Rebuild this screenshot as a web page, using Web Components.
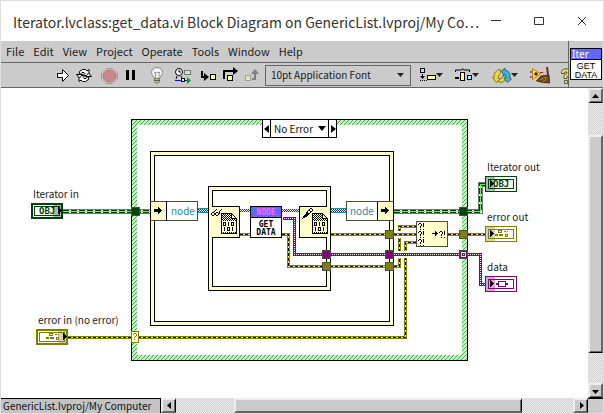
<!DOCTYPE html>
<html lang="en">
<head>
<meta charset="utf-8">
<title>Iterator.lvclass:get_data.vi Block Diagram</title>
<style>
html,body{margin:0;height:100%}
body{font:10px/16px "Noto Sans CJK SC","Noto Sans",sans-serif;color:#1c1c1c;background:#fff}
</style>
</head>
<body>
<app-window></app-window>
<script>
const define=(name,html,after)=>customElements.define(name,class extends HTMLElement{
  constructor(){super();this.attachShadow({mode:'open'}).innerHTML=html;}
  connectedCallback(){if(after&&!this.ready){this.ready=true;after(this,this.shadowRoot);}}
});
/* Turns rows of characters into a path of unit squares; '#' is a filled cell. */
const bits=(x,y,fill,rows)=>{
  let d='';
  rows.forEach((r,j)=>[...r].forEach((c,i)=>{if(c==='#')d+=`M${x+i} ${y+j}h1v1h-1z`;}));
  return `<path fill="${fill}" d="${d}"/>`;
};
const reset=`*{box-sizing:border-box}button,select{font:inherit;color:inherit;margin:0;padding:0;border:0;background:none;border-radius:0;appearance:none}svg{display:block}`;

define('title-bar',`<style>${reset}
:host{display:flex;align-items:center;height:40px;background:#fff;padding-left:12px;color:#333}
h1{flex:1;min-width:0;margin:0;font-size:14px;line-height:24px;font-weight:400;white-space:nowrap;padding-top:2px}
button{width:43px;height:40px;display:grid;place-items:center;flex:none}
</style><h1><slot></slot></h1>
<button aria-label="Minimize"><svg width="12" height="12"><path d="M1 5.500h10" stroke="#333" fill="none"/></svg></button>
<button aria-label="Maximize"><svg width="12" height="12"><path d="M1.500 2.500h9v7h-9z" stroke="#333" fill="none"/></svg></button>
<button aria-label="Close"><svg width="12" height="12"><path d="M2 2l8 8M10 2l-8 8" stroke="#333" fill="none"/></svg></button>`);

define('menu-bar',`<style>${reset}
:host{display:flex;align-items:center;height:22px;padding-left:5px;border-bottom:1px solid #666;font-size:11px}
nav{display:flex;gap:9px}
button{line-height:18px;padding-bottom:2px}
</style><nav></nav>`,(el,root)=>{
  root.querySelector('nav').innerHTML=el.getAttribute('items').split(',').map(t=>`<button>${t}</button>`).join('');
});

define('vi-icon',`<style>${reset}
:host{display:block;box-sizing:border-box;width:32px;height:32px;border:1px solid #000;background:#fff;font:9px/9px "Liberation Sans",sans-serif;color:#000;text-align:center}
b{display:block;font:10px/10px "Noto Sans",sans-serif;color:#fff;background:#6666ff;text-align:left;border-bottom:1px solid #000;padding-left:1px;height:11px;margin-bottom:2px}
span{display:block}
</style><b>Iter</b><span>GET</span><span>DATA</span>`);

const caret=(x,y)=>`<path d="M${x} ${y}h7l-3.500 4z" fill="#222"/>`;
const arrowR=(x,y)=>`<path d="M${x} ${y-3}l4 3.500l-4 3.500z" fill="#000"/>`;
const tools={
run:[52,20,`<path d="M57.500 73.500h5v-4l6 6l-6 6v-4h-5z" fill="#fff" stroke="#000"/>`],
cont:[72,24,`<g fill="#fff" stroke="#000"><path d="M79.500 71.500l3-2h3l1.500 1.500 2-1.500v6h-6l2-2-1-1h-2l-3 3z"/><path d="M88.500 79.500l-3 2h-3l-1.500-1.500-2 1.500v-6h6l-2 2 1 1h2l3-3z"/><path d="M76.500 74.500h6l-3 3.500zM91.500 76.500h-6l3-3.500z"/></g>`],
abort:[96,24,`<path d="M106 68.500h7l4.500 4.500v6l-4.500 4.500h-7l-4.500-4.500v-6z" fill="#eee" stroke="#999"/><path d="M106.500 70h6l3.500 3.500v5l-3.500 3.500h-6l-3.500-3.500v-5z" fill="#c98888" stroke="#a87070"/>`],
pause:[120,24,`<path d="M126 70h3v10h-3zM132 70h3v10h-3z" fill="#000"/>`],
bulb:[144,26,`<path d="M154.500 78.500c0-2-3-3-3-6a5.500 5 0 0 1 11 0c0 3-3 4-3 6z" fill="#f4f4f4" stroke="#888"/><path d="M155.500 78v-4l-1-2l2 1l1.500-1l1 1l1-1-1 2v4" fill="none" stroke="#999"/><path d="M154.500 78.500h5v3l-1 1.500h-3l-1-1.500z" fill="#c8bd84" stroke="#777"/><path d="M155 80.500h5" stroke="#555"/>`],
retain:[170,26,`<circle cx="179" cy="72" r="3.500" fill="#fff" stroke="#000"/><path d="M179 70v2h2M177 76l-1 3M181 76l1.500 3" fill="none" stroke="#000"/><rect x="184.500" y="70.500" width="6" height="4" fill="#ddd" stroke="#777"/><path d="M175 80.500h12" stroke="#00f"/><rect x="181.500" y="78.500" width="3" height="3" fill="#fff" stroke="#000"/><path d="M187 77l4 3.500l-4 3.500z" fill="#0a0"/>`],
into:[196,24,`<path d="M202 71v6h3" stroke="#000" stroke-width="2" fill="none"/><path d="M204 73l5 4l-5 4z"/><rect x="210.500" y="74.500" width="5" height="5" fill="#ffff9c" stroke="#000"/>`],
over:[220,20,`<path d="M224 79v-8h10" stroke="#000" stroke-width="2" fill="none"/><path d="M233 67l5 4l-5 4z"/><rect x="227.500" y="75.500" width="5" height="5" fill="#ffff9c" stroke="#000"/>`],
out:[240,22,`<g opacity=".5"><rect x="245.500" y="75.500" width="5" height="5" fill="#ffff9c" stroke="#777"/><path d="M252 79h3v-6" stroke="#333" stroke-width="2" fill="none"/><path d="M251 74l4-5l4 5z" fill="#333"/></g>`],
align:[414,34,`<rect x="420.500" y="68.500" width="4" height="4" fill="#8cf0ff" stroke="#000"/><rect x="427.500" y="75.500" width="8" height="4" fill="#ffff9c" stroke="#000"/><path d="M422.500 74v3" stroke="#000"/><path d="M420 76h5l-2.500 3zM420 80h1v1h-1zM422 80h1v1h-1zM424 80h1v1h-1zM426 80h1v1h-1z"/>${caret(436,73)}`],
distr:[448,38,`<path d="M455.500 72v-2h6l1-1.500 1 1.500h6v2" fill="none" stroke="#000"/><path d="M455 77h4v2h-4z"/><rect x="460.500" y="72.500" width="4" height="8" fill="#ffff9c" stroke="#000"/><rect x="467.500" y="75.500" width="4" height="4" fill="#8cf0ff" stroke="#000"/>${caret(472,73)}`],
reorder:[486,38,`<path d="M500.500 69.500q-7 1-6.500 8l-1.500 0 4 5 4-4-2 0q-.5-4 2-5z" fill="#e8d43c" stroke="#8a7a18"/><path d="M498 81l3-2.500q2 0 2-3l3 3q-1 4-6 4z" fill="#e8d43c" stroke="#8a7a18"/><path d="M501.500 71l3.500-3v2q6 1 5 8l1.500 1-4 3.500-3.500-4 2-.5q0-3-2-4v2z" fill="#44aecb" stroke="#20708a"/>${caret(511,73)}`],
clean:[524,32,`<path d="M530 72h4M530 77h4" stroke="#00f"/><path d="M540 72.500h3" stroke="#e00"/><path d="M532.500 68.500v11l8-5.500z" fill="#ffe838" stroke="#d07800"/><path d="M536 72v4M534 74h4" stroke="#000"/><path d="M547 67l1 8" stroke="#7c2d0c" stroke-width="2"/><path d="M541 76l8-1 .5 8q-6 0-13-2z" fill="#6e4a22" stroke="#4d2d10"/><path d="M540 80l6-3M543 82l4-4" stroke="#b08448"/>`],
help:[556,12,`<path d="M561.500 73.500v-2l2-2.500h5l2.500 2.500v3l-4 2v2h-3v-3l3-2v-1.500h-2.500v1.500z" fill="#ffec28" stroke="#555"/><path d="M564.500 80.500h3v3h-3z" fill="#ffec28" stroke="#555"/>`]
};
const toolButtons=(names)=>names.map(([k,l])=>`<button aria-label="${l}"><svg width="${tools[k][1]}" height="24" viewBox="${tools[k][0]} 63 ${tools[k][1]} 24">${tools[k][2]}</svg></button>`).join('');
define('tool-bar',`<style>${reset}
:host{display:flex;box-sizing:border-box;align-items:center;height:25px;padding-left:51px;border-bottom:1px solid #666;overflow:hidden}
button{flex:none}
.font{position:relative;display:block;margin:0 3px;flex:none;width:146px;height:21px}
select{width:100%;height:21px;border:1px solid #666;padding:0 5px;line-height:18px}
.font svg{position:absolute;right:7px;top:8px;pointer-events:none}
</style>
${toolButtons([['run','Run'],['cont','Run continuously'],['abort','Abort'],['pause','Pause'],['bulb','Highlight execution'],['retain','Retain wire values'],['into','Step into'],['over','Step over'],['out','Step out']])}
<label class="font"><select aria-label="Text settings"><option>10pt Application Font</option></select><svg width="7" height="4">${caret(0,0)}</svg></label>
${toolButtons([['align','Align objects'],['distr','Distribute objects'],['reorder','Reorder'],['clean','Clean up diagram'],['help','Context help']])}`);

/* Scroll bar: shares are the track before the thumb, the thumb, and the track after it. */
define('scroll-bar',`<style>${reset}
:host{display:flex;flex:1;min-width:0;min-height:0}
:host([vertical]){flex-direction:column}
div{background:#e9e9e9 repeating-conic-gradient(#cfcfcf 0 25%,#eee 0 50%) 0 0/2px 2px}
button{background:#cbcbcb;border:2px solid #eee;border-right-color:#666;border-bottom-color:#666;display:grid;place-items:center;flex:none;width:15px;height:100%;min-width:0;min-height:0}
:host([vertical]) button{width:100%;height:15px;border-bottom:1px solid #000;box-shadow:inset 0 -1px #666}
:host(:not([vertical])) button{border-right:1px solid #000;box-shadow:inset -1px 0 #666}
</style><button class="a" aria-label="Scroll back"></button><div class="b"></div><button class="t" aria-label="Thumb"></button><div class="c"></div><button class="z" aria-label="Scroll forward"></button>`,(el,r)=>{
  const v=el.hasAttribute('vertical');
  const s=d=>`<svg width="7" height="7"><path d="${d}"/></svg>`;
  r.querySelector('.a').innerHTML=s(v?'M0 5L3.500 1L7 5z':'M5 0L1 3.500L5 7z');
  r.querySelector('.z').innerHTML=s(v?'M0 2L3.500 6L7 2z':'M2 0L6 3.500L2 7z');
  ['b','t','c'].forEach((k,i)=>r.querySelector('.'+k).style.flex=el.getAttribute('shares').split(' ')[i]+' 1 0');
});

/* Terminal: a label above its 32x16 symbol. */
const errGlyph=bits(9,4,'#808000',['....####......','....#..#..##.#','....####......','..............','.###.####..###','.###.####..#.#','...........###']);
const kinds={
 obj:['#00400a',`<text x="8" y="11" font-family="DejaVu Sans Mono" font-weight="700" font-size="9" fill="#00400a">OBJ</text>`],
 error:['#808000',errGlyph],
 data:['#800080','<path d="M13.500 5.500h7v5h-7z" fill="none" stroke="#800080"/><path d="M11 7h2v2h-2zM21 7h2v2h-2z" fill="#800080"/>']
};
define('lv-terminal',`<style>${reset}
:host{display:flex;flex-direction:column;gap:1px;position:absolute;white-space:nowrap}
span{padding-left:2px}
</style><span><slot></slot></span><svg width="32" height="16" shape-rendering="crispEdges"></svg>`,(el,r)=>{
  const [c,g]=kinds[el.getAttribute('kind')],inp=el.hasAttribute('input'),w=inp?2:1,x=inp?22:1;
  r.querySelector('svg').innerHTML=`<path fill="#fff" d="M0 0h32v16H0z"/><rect x="${w/2}" y="${w/2}" width="${32-w}" height="${16-w}" fill="none" stroke="${c}" stroke-width="${w}"/>
  <rect x="3.500" y="3.500" width="25" height="9" fill="none" stroke="${c}"/>${g}
  <rect x="${x}" y="1" width="9" height="14" fill="${c}" opacity=".35"/>${arrowR(inp?27:5,7)}`;
});

/* Case selector on the top edge of the case structure. */
define('case-selector',`<style>${reset}
:host{position:absolute;display:flex;height:19px;background:#fff;border:1px solid #000;color:#111;box-sizing:border-box}
button{width:8px;display:grid;place-items:center;flex:none}
button:first-of-type{border-right:1px solid #000}button:last-of-type{border-left:1px solid #000}
label{position:relative}
select{width:57px;height:17px;padding-left:3px;line-height:16px;display:block}
label svg{position:absolute;right:2px;top:6px;pointer-events:none}
</style><button aria-label="Previous case"><svg width="6" height="8"><path d="M5 0v8L0 4z"/></svg></button>
<label><select aria-label="Case"><option>No Error</option></select><svg width="8" height="5"><path d="M0 0h8L4 5z"/></svg></label>
<button aria-label="Next case"><svg width="6" height="8"><path d="M1 0v8L6 4z"/></svg></button>`);

/* White pixels on every second pixel along a run of corner points. */
const dots=pts=>{
  let d='';
  for(let i=1;i<pts.length;i++){
    const [ax,ay]=pts[i-1],[bx,by]=pts[i],n=Math.max(Math.abs(bx-ax),Math.abs(by-ay));
    for(let k=0;k<n;k+=2)d+=`M${ax+Math.sign(bx-ax)*k} ${ay+Math.sign(by-ay)*k}h1v1h-1z`;
  }
  return d;
};
const wire={
 obj:d=>`<g fill="none"><path d="${d}" stroke="#777" stroke-width="5"/><path d="${d}" stroke="#fff" stroke-width="3"/><path d="${d}" stroke="#00400a" stroke-width="3" stroke-dasharray="6 2"/><path d="${d}" stroke="#6cf05c"/></g>`,
 err:d=>`<g fill="none"><path d="${d}" stroke="#808000" stroke-width="3"/><path d="${d}" stroke="#ff0"/><path d="${d}" stroke="#000" stroke-dasharray="3 2"/></g>`,
 data:pts=>`<path d="M${pts.map(([x,y])=>`${x+.5} ${y+.5}`).join('L')}" fill="none" stroke="#800080" stroke-width="3"/><path fill="#fff" d="${dots(pts)}"/>`,
 ref:(x,w,edge)=>{
  let d='';
  for(let j=0;j<3;j++)for(let i=j%2;i<w;i+=2)d+=`M${x+i} ${209+j}h1v1h-1z`;
  return (edge?`<rect x="${x}" y="208" width="${w}" height="5" fill="#009a9a"/>`:'')+`<rect x="${x}" y="209" width="${w}" height="3" fill="#fff"/><path fill="#800080" d="${d}"/>`;
 }
};
const hatch=(x,y,w,h)=>{
  let d='';
  for(let j=y;j<y+h;j++)for(let i=x;i<x+w;i++)if((i+j)%4===0)d+=`M${i} ${j}h1v1h-1z`;
  return `<rect x="${x}" y="${y}" width="${w}" height="${h}" fill="#b3ffb3"/><path fill="#6f9070" d="${d}"/>`;
};
const tunnel=(x,y,c)=>`<rect x="${x+.5}" y="${y+.5}" width="8" height="8" fill="${c}" stroke="#4d4d33"/>`;
const doc=(x,y)=>bits(x,y,'#000',[
'###########.....',
'#.#.#.#.#.##....',
'##.#.#.#.##.#...',
'#.#.#.#.#.#..#..',
'##.#.#.#.##...#.',
'#.#.#.#.#.######',
'##.#.#.#.#.#.#.#',
'#.#.#.#.#.#.#.##',
'#..............#',
'#.###..#..###..#',
'#.#.#..#..#.#..#',
'#.#.#..#..#.#..#',
'#.###..#..###..#',
'#..............#',
'#..#..###..#...#',
'#..#..#.#..#...#',
'#..#..#.#..#...#',
'#..#..###..#...#',
'#..............#',
'#.#.#.#.#.#.#.##',
'################']);
const glasses=bits(211,209,'#000',['.....#....#','....#....#.','...#....#..','.##..##.#..','#..##..##..','#..##..#...','.##..##....']);
const pen=bits(301,208,'#000',['.........##.','........#..#','.......##..#','......#..##.','.....##..#..','.....####...','....####....','...####.....','..####......','..##........','.#..........']);
const qb=(x,y)=>bits(x,y,'#000',['.##..#','#..#.#','...#.#','..#..#','..#...','......','..#..#']);
const arrow=(x,y)=>bits(x,y,'#000',['....#...','....##..','#######.','########','#######.','....##..','....#...']);
const nodeBox=(left)=>left
 ?`<rect x="150" y="201" width="17" height="20" fill="#ffffcc"/><path d="M150.500 201v20" stroke="#000"/><path d="M150 201.500h47.500v19H150" fill="none" stroke="#4d4d33"/><rect x="167" y="202" width="30" height="18" fill="#fff"/><path d="M166.500 201v20" stroke="#000"/>${arrow(154,207)}`
 :`<rect x="346.500" y="201.500" width="31" height="19" fill="#fff" stroke="#4d4d33"/><rect x="378" y="201" width="15" height="20" fill="#ffffcc"/><path d="M377.500 201v20" stroke="#000"/><path d="M377 201.500h16M377 220.500h16" stroke="#4d4d33"/><path d="M393.500 200v22" stroke="#000"/>${arrow(381,207)}`;

define('block-diagram',`<style>${reset}
:host{display:block;position:relative;overflow:hidden;background:#fff;flex:1;min-width:0}
.plane{position:absolute;left:0;top:0}
text{font:10px "Noto Sans CJK SC","Noto Sans",sans-serif}
.mono{font:bold 8px "DejaVu Sans Mono",monospace}
</style>
<svg class="plane" width="587" height="310" viewBox="1 88 587 310" shape-rendering="crispEdges">
<rect x="131.500" y="119.500" width="336" height="241" fill="#fff" stroke="#000"/>
${hatch(132,120,335,5)}${hatch(132,355,335,5)}${hatch(132,125,5,230)}${hatch(462,125,5,230)}
<rect x="150.500" y="151.500" width="243" height="174" fill="#ffffcc" stroke="#000"/><rect x="154.500" y="155.500" width="235" height="166" fill="#fff" stroke="#000"/>
<rect x="208.500" y="186.500" width="122" height="104" fill="#ffffcc" stroke="#000"/><rect x="212.500" y="190.500" width="114" height="96" fill="#fff" stroke="#000"/>
${wire.obj('M63 211.500H150')}${wire.obj('M394 211.500H480.500V184.500H486')}
${wire.ref(198,10,1)}${wire.ref(240,10)}${wire.ref(282,17)}${wire.ref(331,15,1)}
${wire.err('M240 234.500H250')}${wire.err('M282 234.500H288.500V266.500H390')}${wire.err('M331 234.500H385')}
${wire.err('M394 266.500H399.500V226.500H416')}<path fill="#fff" d="M397 231h5v7h-5zM397 251h5v7h-5z"/>
${wire.err('M68 337.500H405.500V242.500H416')}<path fill="#fff" d="M403 251h5v7h-5z"/>
${wire.err('M394 234.500H416')}${wire.err('M448 234.500H485')}
${wire.data([[282,218],[294,218],[294,254],[480,254],[480,284],[486,284]])}
<rect x="208" y="206" width="32" height="32" fill="#ffffcc"/><path d="M212 206.500h27.500v31H212M208.500 206v32" fill="none" stroke="#000"/>${glasses}${doc(221,213)}
<rect x="299" y="206" width="32" height="32" fill="#ffffcc"/><path d="M327 206.500h-27.500v31H327M330.500 206v32" fill="none" stroke="#000"/>${pen}${doc(312,213)}
<rect x="250.500" y="206.500" width="31" height="31" fill="#fff" stroke="#000"/><path fill="#6666ff" d="M251 207h30v10h-30z"/><path d="M251 217.500h30" stroke="#000"/>
<text class="mono" x="266" y="215" text-anchor="middle" fill="#ff66ff">NODE</text><text class="mono" x="266" y="227" text-anchor="middle">GET</text><text class="mono" x="266" y="235" text-anchor="middle">DATA</text>
${nodeBox(true)}${nodeBox(false)}
<text x="171" y="215" fill="#2a8a99">node</text><text x="350" y="215" fill="#2a8a99">node</text>
<rect x="416.500" y="221.500" width="31" height="25" fill="#ffffcc" stroke="#4d4d33"/>${qb(418,223)}${qb(418,231)}${qb(418,239)}${qb(439,231)}${bits(432,231,'#000',['...#..','...##.','######','...##.','...#..'])}
${tunnel(131,207,'#00400a')}${tunnel(459,207,'#00400a')}${tunnel(322,250,'#800080')}${tunnel(385,250,'#800080')}${tunnel(459,250,'#800080')}<path fill="#fff" d="M461 252h5v5h-5z"/><path fill="#800080" d="M462 253h3v3h-3z"/><path fill="#fff" d="M463 254h1v1h-1z"/>
${tunnel(322,262,'#808000')}${tunnel(385,262,'#808000')}${tunnel(385,230,'#808000')}${tunnel(459,230,'#808000')}
<rect x="131.500" y="331.500" width="7" height="11" fill="#ffffcc" stroke="#808000"/>${bits(133,333,'#808000',['.##.','#..#','...#','..#.','.#..','....','.#..'])}
</svg>
<case-selector style="left:261px;top:31px"></case-selector>
<lv-terminal kind="obj" input style="left:30px;top:98px">Iterator in</lv-terminal>
<lv-terminal kind="error" input style="left:35px;top:224px">error in (no error)</lv-terminal>
<lv-terminal kind="obj" style="left:484px;top:71px">Iterator out</lv-terminal>
<lv-terminal kind="error" style="left:484px;top:121px">error out</lv-terminal>
<lv-terminal kind="data" style="left:484px;top:171px">data</lv-terminal>`);

define('app-window',`<style>${reset}
:host{display:flex;flex-direction:column;height:100vh;box-sizing:border-box;border:1px solid #dedede;overflow:hidden}
header{display:flex;background:#cbcbcb;color:#1c1c1c}
.bars{flex:1;min-width:0}
.pane{width:35px;border-left:1px solid #666;border-bottom:1px solid #666;padding:7px 1px}
main{flex:1;display:flex;min-height:0}
.side{width:15px;display:flex}
footer{display:flex;height:15px;flex:none}
.where{background:#c4c4c4;border:1px solid #000;border-width:1px 1px 0 0;padding:0 3px 0 2px;line-height:14px;white-space:nowrap;color:#111;width:160px}
.corner{width:15px;background:#cbcbcb;border-top:1px solid #000}
</style>
<title-bar>Iterator.lvclass:get_data.vi Block Diagram on GenericList.lvproj/My Co⋯</title-bar>
<header><div class="bars"><menu-bar items="File,Edit,View,Project,Operate,Tools,Window,Help"></menu-bar><tool-bar></tool-bar></div><div class="pane"><vi-icon></vi-icon></div></header>
<main><block-diagram></block-diagram><div class="side"><scroll-bar vertical shares="32 219 30"></scroll-bar></div></main>
<footer><div class="where">GenericList.lvproj/My Computer</div><scroll-bar shares="58 288 51"></scroll-bar><div class="corner"></div></footer>`);
</script>
</body>
</html>
